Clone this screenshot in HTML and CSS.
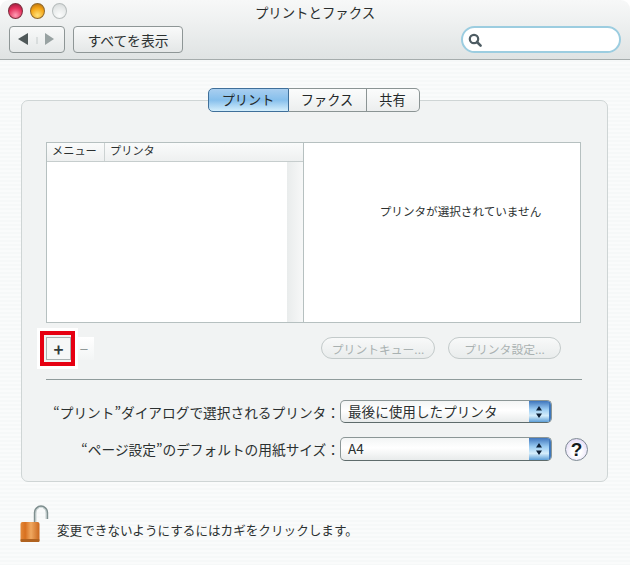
FILE: index.html
```html
<!DOCTYPE html>
<html lang="ja">
<head>
<meta charset="utf-8">
<title>プリントとファクス</title>
<link rel="stylesheet" href="styles.css">
</head>
<body>
<div class="window">
  <header class="toolbar">
    <div class="titlebar">
      <div class="lights">
        <span class="light red"></span>
        <span class="light amber"></span>
        <span class="light off"></span>
      </div>
      <div class="title">プリントとファクス</div>
    </div>
    <div class="tools">
      <div class="nav-group">
        <svg class="nav-icon" width="56" height="26" viewBox="0 0 56 26"><path d="M9 13l10-6v12z" fill="#4f5859"/><path d="M36 7l9 6-9 6z" fill="#98a2a2"/><path d="M28 11v7" stroke="#c4caca"/></svg>
      </div>
      <button class="show-all">すべてを表示</button>
      <div class="search">
        <svg width="16" height="16" viewBox="0 0 16 16"><circle cx="7" cy="7" r="4.2" fill="none" stroke="#4e5c63" stroke-width="2.2"/><path d="M10 10l3.6 3.6" stroke="#4e5c63" stroke-width="2.6" stroke-linecap="round"/></svg>
      </div>
    </div>
  </header>
  <main class="content">
    <section class="panel">
      <div class="tabs">
        <div class="tab active">プリント</div>
        <div class="tab mid">ファクス</div>
        <div class="tab last">共有</div>
      </div>
      <div class="browser">
        <div class="list">
          <div class="list-head">
            <div class="col-menu">メニュー</div>
            <div class="col-printer">プリンタ</div>
          </div>
          <div class="list-body"><div class="scroll"></div></div>
        </div>
        <div class="detail">プリンタが選択されていません</div>
      </div>
      <div class="actions">
        <button class="square plus">+</button>
        <button class="square minus">−</button>
        <div class="spacer"></div>
        <button class="pill queue">プリントキュー...</button>
        <button class="pill setup">プリンタ設定...</button>
      </div>
      <div class="rule"></div>
      <div class="form-row first">
        <div class="label">“プリント”ダイアログで選択されるプリンタ：</div>
        <div class="popup"><span class="popup-text">最後に使用したプリンタ</span><span class="stepper"><svg width="8" height="18" viewBox="0 0 8 18"><path d="M4 3l3 4.5H1zM4 15l3-4.5H1z" fill="#0e2036"/></svg></span></div>
      </div>
      <div class="form-row second">
        <div class="label">“ページ設定”のデフォルトの用紙サイズ：</div>
        <div class="popup"><span class="popup-text">A4</span><span class="stepper"><svg width="8" height="18" viewBox="0 0 8 18"><path d="M4 3l3 4.5H1zM4 15l3-4.5H1z" fill="#0e2036"/></svg></span></div>
        <div class="help">?</div>
      </div>
    </section>
    <footer class="lockbar">
      <svg class="lock" width="30" height="38" viewBox="0 0 30 38">
        <defs>
          <linearGradient id="lockBody" x1="0" x2="1" y1="0" y2="0">
            <stop offset="0" stop-color="#e38a3a"/>
            <stop offset="0.25" stop-color="#d8701f"/>
            <stop offset="0.55" stop-color="#f0a860"/>
            <stop offset="1" stop-color="#c9661c"/>
          </linearGradient>
        </defs>
        <path d="M15 18V7.5a6 6 0 0 1 12 0V14" fill="none" stroke="#7f8f8f" stroke-width="2.4"/>
        <path d="M15.8 18V7.5a5.2 5.2 0 0 1 10.4 0V14" fill="none" stroke="#dfe6e6" stroke-width="0.9"/>
        <rect x="0.5" y="17" width="19" height="20" rx="2" fill="url(#lockBody)"/>
        <rect x="0.5" y="34" width="19" height="3" rx="1" fill="#b0621f"/>
      </svg>
      <span class="lock-text">変更できないようにするにはカギをクリックします。</span>
    </footer>
  </main>
</div>
</body>
</html>
```
FILE: styles.css
```css
*, *::before, *::after { box-sizing: border-box; }
html, body { margin: 0; padding: 0; background: #fff; }
body { width: 630px; height: 565px; overflow: hidden; font-family: "Noto Sans CJK JP", "Liberation Sans", sans-serif; color: #2b3030; }
.window { width: 630px; height: 565px; border-radius: 9px 9px 0 0; overflow: hidden; display: flex; flex-direction: column; }
button { font-family: inherit; padding: 0; margin: 0; }

.toolbar { height: 60px; flex: none; background: linear-gradient(#f7f8f8, #eef0f0 40%, #dfe3e3); border-bottom: 1px solid #a5acac; }
.titlebar { position: relative; height: 26px; display: flex; align-items: center; justify-content: center; }
.lights { position: absolute; left: 8px; top: 3px; display: flex; gap: 7px; }
.light { width: 15px; height: 16px; border-radius: 50%; border: 1px solid #8a8a8a; }
.light.red { background: radial-gradient(circle at 50% 80%, #ff9db4, #e4305c 55%, #9c1a3c 95%); border-color: #7c2c3c; }
.light.amber { background: radial-gradient(circle at 50% 80%, #ffe27a, #f4a516 55%, #b8700c 95%); border-color: #8f682a; }
.light.off { background: radial-gradient(circle at 50% 80%, #fbfcfc, #e6e9e9 60%, #d2d7d7); border-color: #b6bcbc; }
.title { font-size: 13.4px; line-height: 22px; margin-top: -3px; color: #2a2e2e; }
.tools { display: flex; align-items: flex-start; padding: 0 9px 0 9px; }
.nav-group { width: 56px; height: 27px; border: 1px solid #8e9696; border-radius: 4px; background: linear-gradient(#f8f9f9, #e6e9e9); }
.nav-icon { display: block; margin: -1px; }
.show-all { width: 110px; height: 27px; margin-left: 8px; border: 1px solid #8e9696; border-radius: 4px; background: linear-gradient(#f9fafa, #e4e7e7); font-size: 13.8px; color: #2b3030; }
.search { width: 160px; height: 27px; margin-left: auto; background: #fff; border: 2px solid #9ccde0; border-radius: 14px; display: flex; align-items: center; padding-left: 4px; }

.content { flex: 1; padding: 28px 22px 0 21px; background: repeating-linear-gradient(#f6f8f8 0 2px, #fafbfb 2px 4px); }
.panel { height: 382px; margin-top: 12px; padding: 0 26px 0 24px; background: #f1f3f3; border: 1px solid #cfd5d5; border-radius: 7px; }
.tabs { display: flex; justify-content: center; height: 24px; margin: -13px 0 0 0; position: relative; font-size: 13.2px; }
.tab { height: 24px; line-height: 22px; text-align: center; border: 1px solid #8b9494; border-left: 0; background: linear-gradient(#fbfcfc, #eceeee); color: #24292a; }
.tab.active { width: 81px; border-left: 1px solid #3f6f99; border-color: #3f6f99; border-radius: 5px 0 0 5px; background: linear-gradient(#a9cff0, #86bfec 50%, #d3eefc); }
.tab.mid { width: 78px; }
.tab.last { width: 53px; border-radius: 0 5px 5px 0; }

.browser { display: flex; height: 181px; margin-top: 30px; background: #fff; border: 1px solid #b6c0c0; }
.list { width: 257px; border-right: 1px solid #b6c0c0; display: flex; flex-direction: column; }
.list-head { display: flex; height: 19px; flex: none; font-size: 11.2px; line-height: 15px; border-bottom: 1px solid #c6cdcd; background: linear-gradient(#fafbfb, #eef0f0); }
.col-menu { width: 58px; padding-left: 5px; border-right: 1px solid #ccd2d2; }
.col-printer { padding-left: 5px; }
.list-body { flex: 1; display: flex; justify-content: flex-end; }
.scroll { width: 16px; background: linear-gradient(90deg, #e9ecec, #f7f8f8); }
.detail { flex: 1; display: flex; align-items: center; justify-content: center; font-size: 11.6px; padding: 0 0 44px 37px; }

.actions { display: flex; align-items: flex-start; height: 42px; margin-top: 14px; }
.square { width: 25px; height: 23px; border: 0; background: #f6f7f7; }
.plus { position: relative; font-size: 17px; font-weight: 700; line-height: 20px; color: #333b3b; border: 1px solid #aab2b2; }
.plus::after { content: ""; position: absolute; left: -7px; top: -7px; width: 35px; height: 35px; border: 4px solid #e60012; box-shadow: 0 0 0 3px #fff; }
.minus { color: #8f9898; font-size: 15px; line-height: 20px; background: linear-gradient(#fff, #f3f5f5); width: 23px; margin-left: 0; text-align: right; padding-right: 6px; }
.spacer { flex: 1; }
.pill { height: 22px; border: 1px solid #c3caca; border-radius: 11px; background: linear-gradient(#f8f9f9, #e9ecec); color: #a9b1b1; font-size: 11.8px; }
.queue { width: 114px; }
.setup { width: 113px; margin-left: 13px; margin-right: 20px; }

.rule { height: 1px; background: #8f9b9b; margin-right: -1px; }
.form-row { display: flex; align-items: center; }
.form-row.first { height: 23px; margin-top: 20px; }
.form-row.second { height: 24px; margin-top: 14px; }
.label { width: 294px; flex: none; text-align: right; font-size: 13.7px; white-space: nowrap; color: #2b3030; }
.popup { width: 212px; flex: none; height: 100%; display: flex; justify-content: space-between; border: 1px solid #8b9696; border-bottom-color: #5e6b6b; border-radius: 5px; background: linear-gradient(#f3f5f5, #fff 45%, #e8ebeb); font-size: 13.6px; line-height: 21px; overflow: hidden; }
.popup-text { padding-left: 7px; }
.stepper { width: 22px; display: flex; align-items: center; justify-content: center; background: linear-gradient(#3f76bd, #9ccdf3 40%, #d5edfb 70%, #5d9fd8); border-right: 2px solid #3f78bb; }
.help { width: 23px; height: 23px; flex: none; margin-left: 13px; border-radius: 50%; border: 1px solid #7e8a94; background: radial-gradient(circle at 50% 60%, #ffffff 30%, #d6c9f2); font-family: "Liberation Sans", sans-serif; font-weight: 700; font-size: 19px; line-height: 21px; text-align: center; color: #141a1e; }

.lockbar { display: flex; align-items: flex-start; margin-top: 23px; margin-left: -1px; }
.lock { flex: none; display: block; }
.lock-text { font-size: 12.6px; margin: 15px 0 0 7px; white-space: nowrap; color: #2b3030; }
```
